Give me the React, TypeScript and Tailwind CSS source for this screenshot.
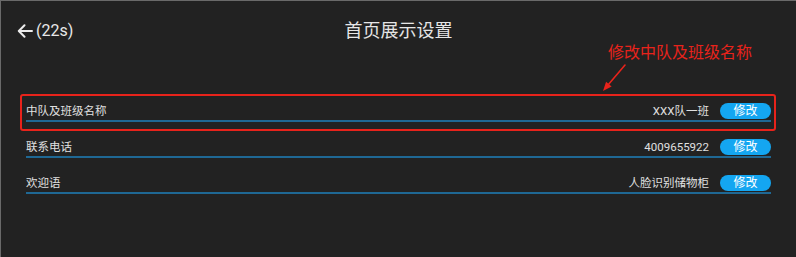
import React from "react";

const rows = [
  { label: "中队及班级名称", value: "XXX队一班" },
  { label: "联系电话", value: "4009655922" },
  { label: "欢迎语", value: "人脸识别储物柜" },
];

function BackArrow() {
  return (
    <svg width="16" height="14" viewBox="0 0 16 14" fill="none">
      <path
        d="M15 7H2M7.5 1.2L1.8 7L7.5 12.8"
        stroke="#ececec"
        strokeWidth="2"
        strokeLinecap="round"
        strokeLinejoin="round"
      />
    </svg>
  );
}

function PointerArrow() {
  return (
    <svg width="30" height="32" viewBox="0 0 30 32" fill="none">
      <path d="M27 3L10 23" stroke="#e8231b" strokeWidth="1.6" strokeLinecap="round" />
      <path d="M5 29L13.6 24.4L8.1 19.8Z" fill="#e8231b" />
    </svg>
  );
}

export default function App() {
  return (
    <div
      className="relative h-[257px] w-[796px] overflow-hidden border-l border-t border-[#6a6a6a] bg-[#222222]"
      style={{ fontFamily: 'Roboto, "Noto Sans CJK SC", sans-serif' }}
    >
      <header className="relative flex h-[60px] items-center">
        <button className="ml-[16px] flex items-center gap-[3px] text-[16px] leading-none text-[#e8e8e8]">
          <BackArrow />
          <span>(22s)</span>
        </button>
        <h1 className="absolute left-0 right-0 text-center text-[18px] leading-none text-[#e6e6e6]">
          首页展示设置
        </h1>
      </header>

      <div className="mt-[25px] flex flex-col pl-[25px] pr-[25px]">
        {rows.map((row) => (
          <div
            key={row.label}
            className="flex h-[36px] items-end justify-between border-b-2 border-[#1f6894] pb-[1px]"
          >
            <span className="text-[11.5px] leading-[16px] text-[#e0e0e0]">{row.label}</span>
            <div className="flex items-end gap-[11px]">
              <span className="text-[11.5px] leading-[16px] text-[#e0e0e0]">{row.value}</span>
              <button className="h-[16px] w-[51px] rounded-full bg-[#14a6f1] text-[12px] leading-[16px] text-white">
                修改
              </button>
            </div>
          </div>
        ))}
      </div>

      <div className="pointer-events-none absolute left-[19px] top-[93px] h-[37px] w-[756px] rounded-[3px] border-2 border-[#e8231b]" />
      <div className="absolute left-[607px] top-[43px] text-[16px] leading-[18px] text-[#e8231b]">
        修改中队及班级名称
      </div>
      <div className="absolute left-[597px] top-[61px]">
        <PointerArrow />
      </div>
    </div>
  );
}
